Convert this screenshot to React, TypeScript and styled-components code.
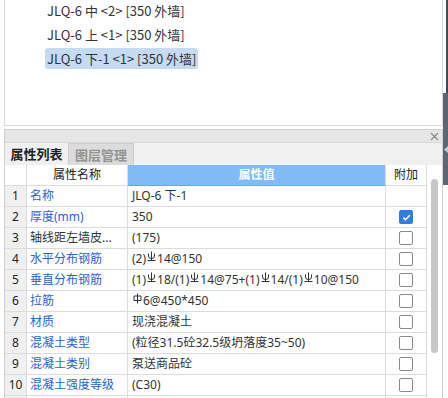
import React from 'react';
import styled, { createGlobalStyle, css } from 'styled-components';

const GlobalStyle = createGlobalStyle`
  html, body {
    margin: 0;
    padding: 0;
    background: #fff;
  }
  body {
    font-family: "Noto Sans CJK SC", "Noto Sans", sans-serif;
    font-size: 13px;
    color: #222;
  }
  * {
    box-sizing: border-box;
  }
`;

// '#' = HRB400 rebar mark, '$' = HPB300 rebar mark
type Row = { name: string; value: string; link: boolean; check?: boolean };

const rows: Row[] = [
  { name: '名称', value: 'JLQ-6 下-1', link: true },
  { name: '厚度(mm)', value: '350', link: true, check: true },
  { name: '轴线距左墙皮...', value: '(175)', link: false, check: false },
  { name: '水平分布钢筋', value: '(2)#14@150', link: true, check: false },
  { name: '垂直分布钢筋', value: '(1)#18/(1)#14@75+(1)#14/(1)#10@150', link: true, check: false },
  { name: '拉筋', value: '$6@450*450', link: true, check: false },
  { name: '材质', value: '现浇混凝土', link: true, check: false },
  { name: '混凝土类型', value: '(粒径31.5砼32.5级坍落度35~50)', link: true, check: false },
  { name: '混凝土类别', value: '泵送商品砼', link: true, check: false },
  { name: '混凝土强度等级', value: '(C30)', link: true, check: false },
];

const listItems = ['JLQ-6 中 <2> [350 外墙]', 'JLQ-6 上 <1> [350 外墙]', 'JLQ-6 下-1 <1> [350 外墙]'];

function Rebar3() {
  return (
    <Mark width="9" height="11" viewBox="0 0 9 11">
      <path d="M4.5 0.5V9.5M1.5 2.5V5Q1.5 7.6 4.5 7.6Q7.5 7.6 7.5 5V2.5M0.5 9.5H8.5" stroke="currentColor" strokeWidth="1" fill="none" />
    </Mark>
  );
}

function Rebar1() {
  return (
    <Mark width="9" height="11" viewBox="0 0 9 11">
      <path d="M1 3H8V7.5H1ZM4.5 0.5V10.5" stroke="currentColor" strokeWidth="1" fill="none" />
    </Mark>
  );
}

function Value({ text }: { text: string }) {
  const parts = text.split(/([#$])/).filter(Boolean);
  return (
    <>
      {parts.map((p, i) => (p === '#' ? <Rebar3 key={i} /> : p === '$' ? <Rebar1 key={i} /> : <span key={i}>{p}</span>))}
    </>
  );
}

function App() {
  return (
    <Page>
      <GlobalStyle />
      <Main>
        <ListPanel>
          {listItems.map((t, i) => (
            <ListItem key={t} $selected={i === 2}>
              {t}
            </ListItem>
          ))}
        </ListPanel>

        <Dock>
          <TitleBar>
            <svg width="9" height="9" viewBox="0 0 9 9">
              <path d="M1 1L8 8M8 1L1 8" stroke="#8c8c8c" strokeWidth="1.2" />
            </svg>
          </TitleBar>
          <TabRow>
            <Tab $active>属性列表</Tab>
            <Tab>图层管理</Tab>
          </TabRow>

          <TableArea>
            <Grid>
              <HeadCell />
              <HeadCell>属性名称</HeadCell>
              <HeadCell $blue>属性值</HeadCell>
              <HeadCell>附加</HeadCell>

              {rows.map((r, i) => (
                <React.Fragment key={r.name}>
                  <NumCell>{i + 1}</NumCell>
                  <NameCell $link={r.link}>{r.name}</NameCell>
                  <ValueCell>
                    <Value text={r.value} />
                  </ValueCell>
                  <CheckCell>{r.check !== undefined && <Check $on={r.check}>{r.check && <CheckMark />}</Check>}</CheckCell>
                </React.Fragment>
              ))}

              {/* next row, only its top edge shows */}
              <NumCell />
              <NameCell />
              <ValueCell />
              <CheckCell />
            </Grid>
            <ScrollTrack>
              <Thumb />
            </ScrollTrack>
          </TableArea>
        </Dock>
      </Main>

      <Edge>
        <EdgeLine />
        <EdgeBlock>
          <svg width="4" height="7" viewBox="0 0 4 7">
            <path d="M4 0L0 3.5L4 7Z" fill="#c3c9cf" />
          </svg>
        </EdgeBlock>
        <EdgeRest />
      </Edge>
    </Page>
  );
}

function CheckMark() {
  return (
    <svg width="11" height="11" viewBox="0 0 11 11">
      <path d="M2.3 5.6L4.5 7.7L8.8 3.2" stroke="#fff" strokeWidth="1.6" fill="none" />
    </svg>
  );
}

export default App;

const Page = styled.div`
  display: flex;
  width: 448px;
  height: 398px;
  overflow: hidden;
`;

const Main = styled.div`
  display: flex;
  flex-direction: column;
  width: 439px;
  margin-left: 4px;
  gap: 3px;
`;

const ListPanel = styled.div`
  height: 126px;
  border: 1px solid #d8d8d8;
  border-top: none;
  padding-left: 40px;
  display: flex;
  flex-direction: column;
  align-items: flex-start;
  gap: 3px;
`;

const ListItem = styled.div<{ $selected?: boolean }>`
  height: 21px;
  line-height: 21px;
  padding: 0 2px;
  border-radius: 3px;
  color: #333;
  white-space: nowrap;
  ${(p) =>
    p.$selected &&
    css`
      background: #c4dbf2;
    `}
`;

const Dock = styled.div`
  flex: 1;
  display: flex;
  flex-direction: column;
  border: 1px solid #d0d0d0;
  border-bottom: none;
  min-height: 0;
`;

const TitleBar = styled.div`
  height: 13px;
  background: #e6e6e6;
  border-bottom: 1px solid #d8d8d8;
  display: flex;
  justify-content: flex-end;
  align-items: center;
  padding-right: 3px;
`;

const TabRow = styled.div`
  height: 22px;
  background: #f0f0f0;
  display: flex;
`;

const Tab = styled.div<{ $active?: boolean }>`
  height: 22px;
  line-height: 21px;
  font-weight: bold;
  text-align: center;
  ${(p) =>
    p.$active
      ? css`
          width: 63px;
          color: #222;
          background: #f0f0f0;
        `
      : css`
          width: 66px;
          color: #939393;
          background: #dcdcdc;
          border: 1px solid #cdcdcd;
          border-bottom: none;
        `}
`;

const TableArea = styled.div`
  flex: 1;
  display: flex;
  min-height: 0;
  overflow: hidden;
  font-family: "Noto Sans", "Noto Sans CJK SC", sans-serif;
  font-size: 12px;
`;

const Grid = styled.div`
  display: grid;
  grid-template-columns: 22px 101px 258px 41px;
  grid-auto-rows: 21px;
  align-content: start;
`;

const cellBase = css`
  border-right: 1px solid #dcdcdc;
  border-bottom: 1px solid #dcdcdc;
  white-space: nowrap;
  overflow: hidden;
  line-height: 20px;
`;

const HeadCell = styled.div<{ $blue?: boolean }>`
  ${cellBase};
  text-align: center;
  background: #fff;
  color: #222;
  ${(p) =>
    p.$blue &&
    css`
      background: #80bbf5;
      color: #fff;
      font-weight: bold;
      border-bottom-color: #62a6ec;
    `}
`;

const NumCell = styled.div`
  ${cellBase};
  background: #f0f0f0;
  text-align: center;
  color: #222;
`;

const NameCell = styled.div<{ $link?: boolean }>`
  ${cellBase};
  padding-left: 3px;
  color: ${(p) => (p.$link ? '#2b62d9' : '#333')};
`;

const ValueCell = styled.div`
  ${cellBase};
  padding-left: 4px;
  color: #333;
`;

const Mark = styled.svg`
  vertical-align: 1px;
  margin: 0 1px;
`;

const CheckCell = styled.div`
  ${cellBase};
  display: flex;
  justify-content: center;
  align-items: center;
`;

const Check = styled.div<{ $on?: boolean }>`
  width: 14px;
  height: 14px;
  border-radius: 2px;
  display: flex;
  align-items: center;
  justify-content: center;
  border: 1px solid ${(p) => (p.$on ? '#2f7fe3' : '#8a8a8a')};
  background: ${(p) => (p.$on ? '#2f7fe3' : '#fff')};
`;

const ScrollTrack = styled.div`
  width: 15px;
  padding: 14px 0 0 4px;
`;

const Thumb = styled.div`
  width: 7px;
  height: 174px;
  border-radius: 4px;
  background: #c8c8c8;
`;

const Edge = styled.div`
  width: 5px;
  display: flex;
  flex-direction: column;
`;

const EdgeLine = styled.div`
  height: 93px;
  margin-left: 3px;
  background: #3f4752;
`;

const EdgeBlock = styled.div`
  height: 92px;
  background: #5c6675;
  padding-top: 45px;
  padding-left: 1px;
`;

const EdgeRest = styled.div`
  flex: 1;
  background: #fff;
`;
